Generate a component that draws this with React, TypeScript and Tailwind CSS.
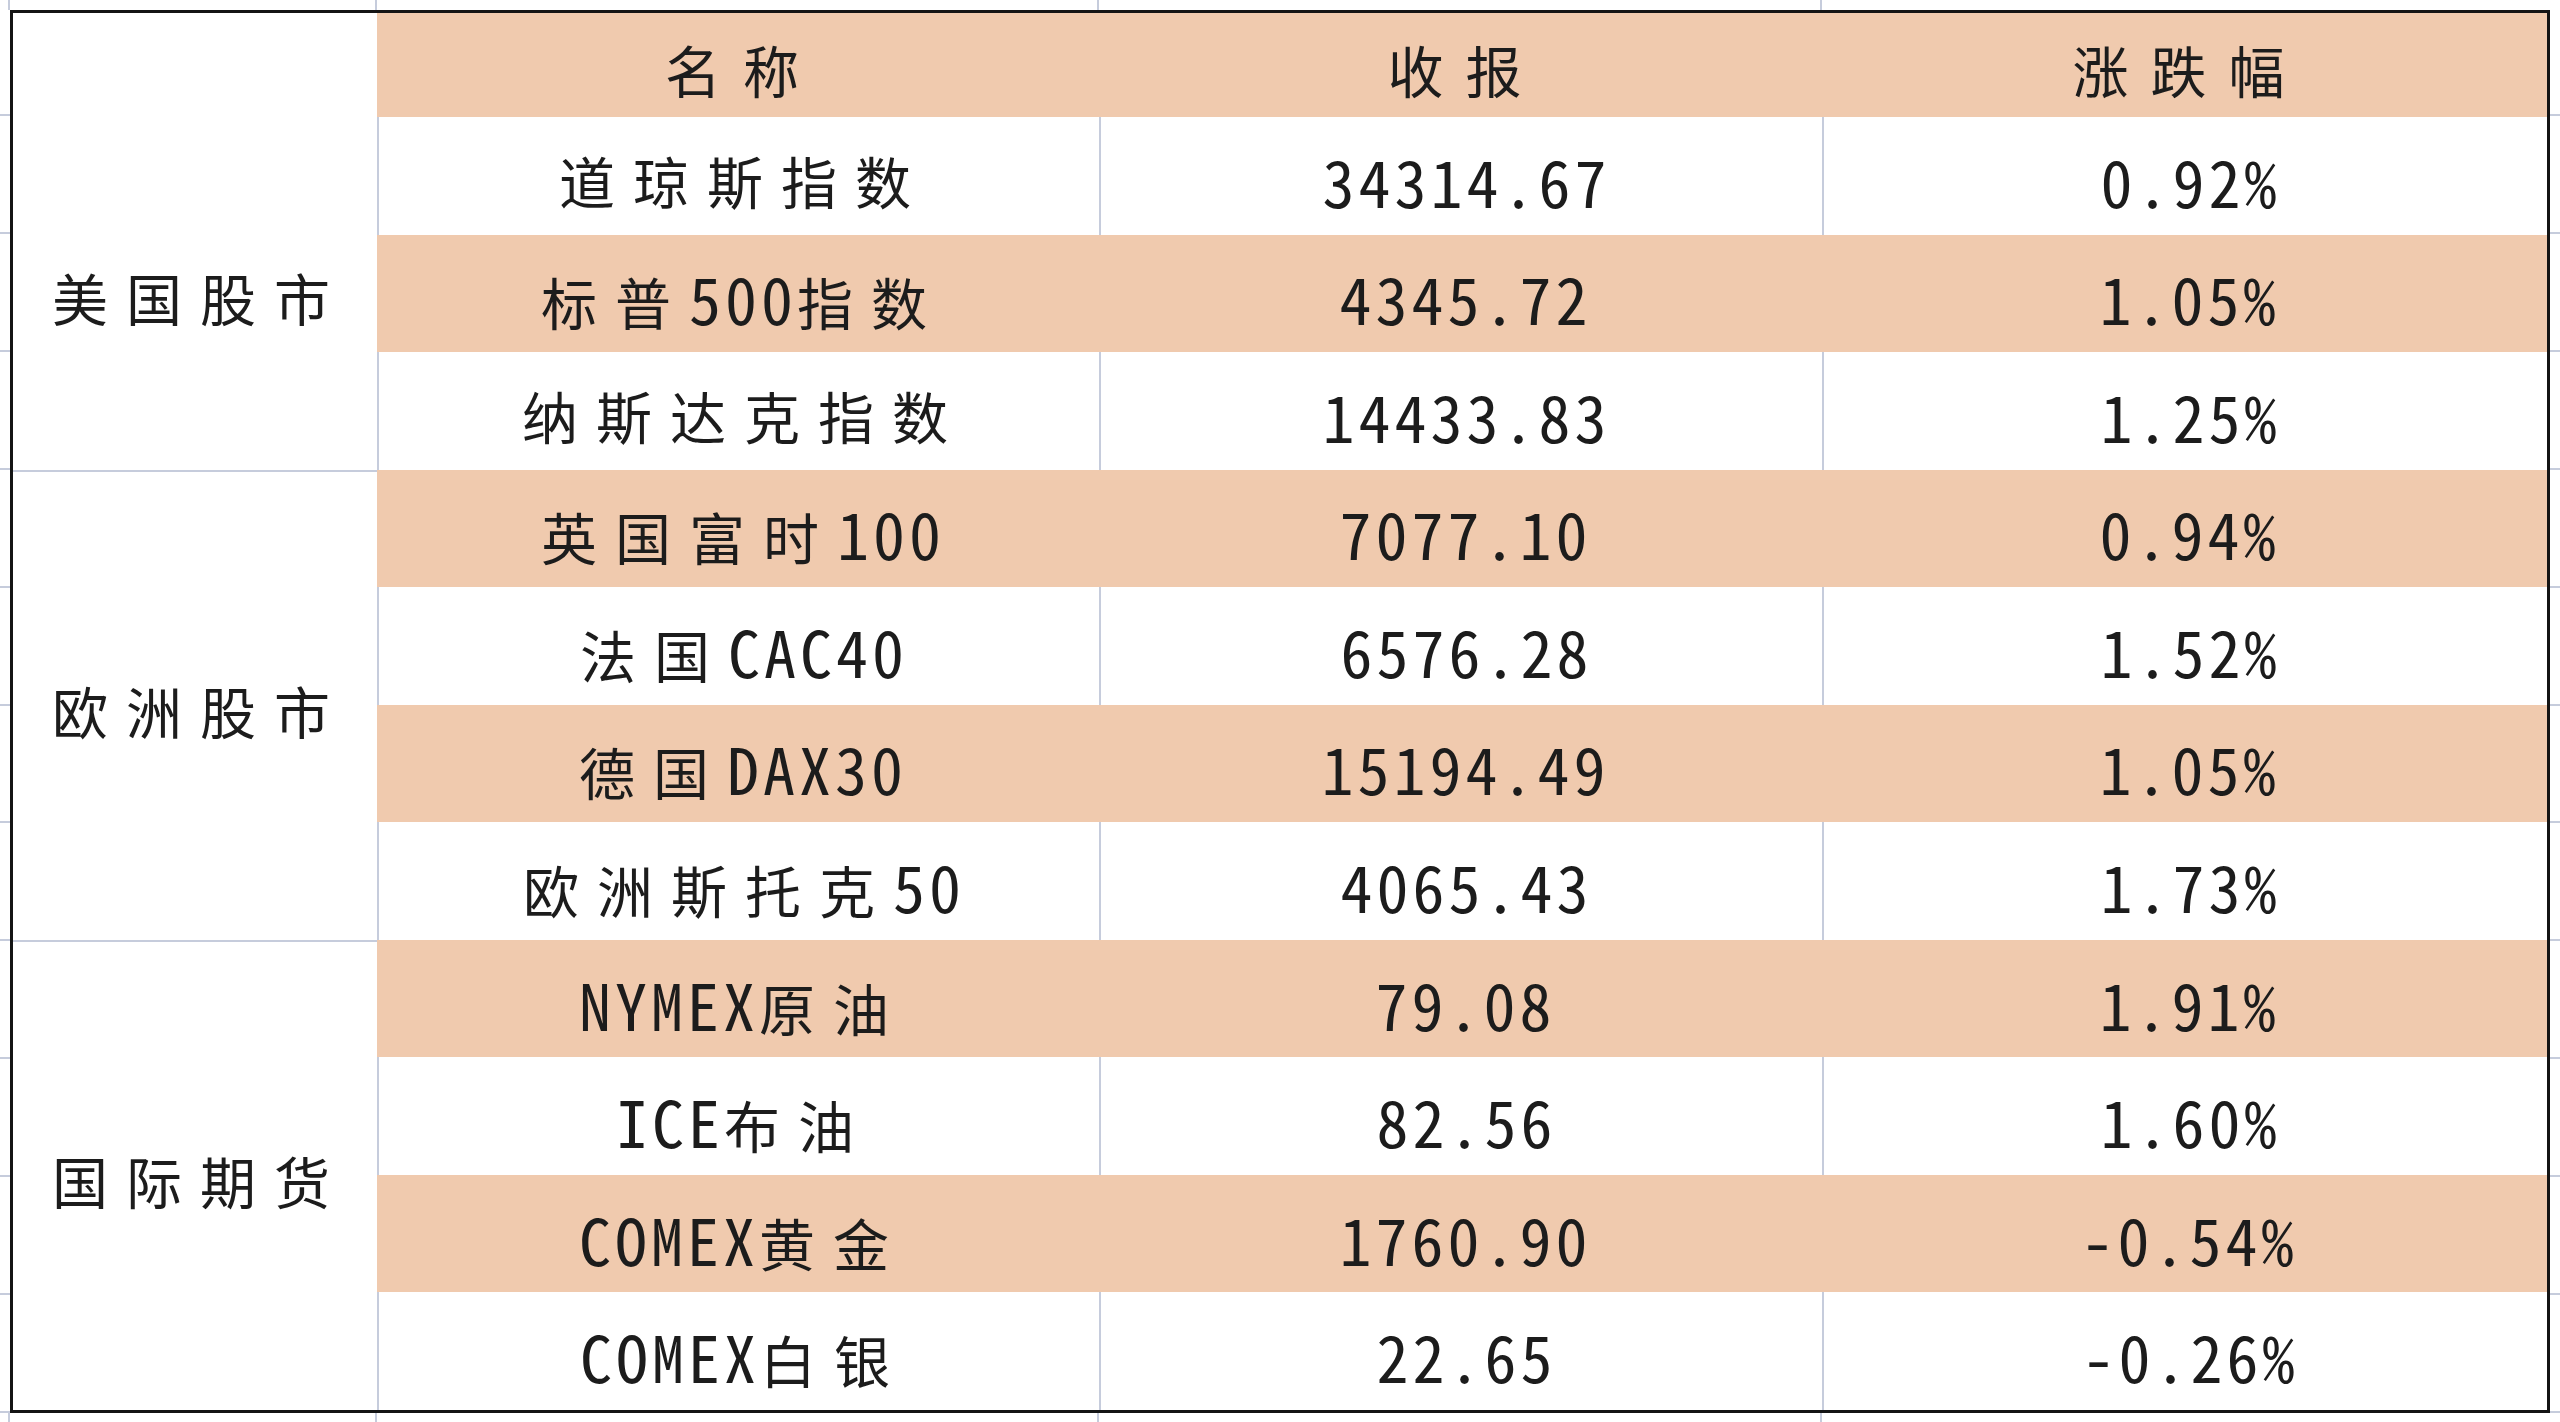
import React from 'react';

interface Row {
    name: string;
    close: string;
    change: string;
}

interface Group {
    label: string;
    rows: Row[];
}

const groups: Group[] = [
    {
        label: '美国股市',
        rows: [
            { name: '道琼斯指数', close: '34314.67', change: '0.92%' },
            { name: '标普500指数', close: '4345.72', change: '1.05%' },
            { name: '纳斯达克指数', close: '14433.83', change: '1.25%' },
        ],
    },
    {
        label: '欧洲股市',
        rows: [
            { name: '英国富时100', close: '7077.10', change: '0.94%' },
            { name: '法国CAC40', close: '6576.28', change: '1.52%' },
            { name: '德国DAX30', close: '15194.49', change: '1.05%' },
            { name: '欧洲斯托克50', close: '4065.43', change: '1.73%' },
        ],
    },
    {
        label: '国际期货',
        rows: [
            { name: 'NYMEX原油', close: '79.08', change: '1.91%' },
            { name: 'ICE布油', close: '82.56', change: '1.60%' },
            { name: 'COMEX黄金', close: '1760.90', change: '-0.54%' },
            { name: 'COMEX白银', close: '22.65', change: '-0.26%' },
        ],
    },
];

// split mixed text so CJK and half-width runs get their own size / spacing
const Txt: React.FC<{ text: string; header?: boolean }> = ({ text, header }) => {
    const runs = text.match(/[\u4e00-\u9fff]+|[^\u4e00-\u9fff]+/g) || [];
    return (
        <span className="whitespace-nowrap leading-none">
            {runs.map((run, i) =>
                /[\u4e00-\u9fff]/.test(run) ? (
                    <span
                        key={i}
                        className={`font-['Noto_Sans_CJK_SC',sans-serif] text-[56px] ${header ? 'tracking-[22px]' : 'tracking-[18px]'}`}
                    >
                        {run}
                    </span>
                ) : (
                    <span key={i} className="font-['Noto_Sans_Mono_CJK_SC','Noto_Sans_CJK_SC',monospace] text-[64px] tracking-[4px]">
                        {run}
                    </span>
                )
            )}
        </span>
    );
};

const cell = 'flex items-center justify-center pt-[8px] pl-[10px] text-[#1c1c1c]';
const peach = 'bg-[#f0caae]';
const grid = 'border-l-2 border-[#c6ccdc]';

const App: React.FC = () => {
    let rowIndex = 0;

    return (
        <div className="w-[2560px] h-[1422px] bg-white flex flex-col overflow-hidden">
            {/* Sheet gridlines above the table */}
            <div className="h-[10px] flex">
                <div className="w-[10px] border-r-2 border-[#c6ccdc]" />
                <div className="w-[367px] border-r-2 border-[#c6ccdc]" />
                <div className="w-[722px] border-r-2 border-[#c6ccdc]" />
                <div className="w-[723px] border-r-2 border-[#c6ccdc]" />
                <div className="flex-1" />
            </div>

            <div className="h-[1403px] flex">
                {/* Sheet gridlines left */}
                <div className="w-[10px] flex flex-col">
                    <div className="h-[106px] border-b-2 border-[#c6ccdc]" />
                    {Array.from({ length: 11 }).map((_, i) => (
                        <div key={i} className="flex-1 border-b-2 border-[#c6ccdc]" />
                    ))}
                </div>

                {/* Table */}
                <div className="flex-1 border-[3px] border-[#141414] grid grid-cols-[364px_722px_723px_1fr] grid-rows-[104px_repeat(11,minmax(0,1fr))]">
                    {/* Header */}
                    <div className="bg-white" />
                    <div className={`${cell} ${peach}`}>
                        <Txt text="名称" header />
                    </div>
                    <div className={`${cell} ${peach}`}>
                        <Txt text="收报" header />
                    </div>
                    <div className={`${cell} ${peach}`}>
                        <Txt text="涨跌幅" header />
                    </div>

                    {groups.map((group, gi) => (
                        <React.Fragment key={group.label}>
                            <div
                                className={`${cell} bg-white ${gi > 0 ? 'border-t-2 border-[#c6ccdc]' : ''} ${
                                    group.rows.length === 3 ? 'row-span-3' : 'row-span-4'
                                }`}
                            >
                                <Txt text={group.label} />
                            </div>
                            {group.rows.map((row) => {
                                rowIndex += 1;
                                const isPeach = rowIndex % 2 === 0;
                                const bg = isPeach ? peach : `bg-white ${grid}`;
                                return (
                                    <React.Fragment key={row.name}>
                                        <div className={`${cell} ${bg}`}>
                                            <Txt text={row.name} />
                                        </div>
                                        <div className={`${cell} ${bg}`}>
                                            <Txt text={row.close} />
                                        </div>
                                        <div className={`${cell} ${bg}`}>
                                            <Txt text={row.change} />
                                        </div>
                                    </React.Fragment>
                                );
                            })}
                        </React.Fragment>
                    ))}
                </div>

                {/* Sheet gridlines right */}
                <div className="w-[10px] flex flex-col">
                    <div className="h-[106px] border-b-2 border-[#c6ccdc]" />
                    {Array.from({ length: 11 }).map((_, i) => (
                        <div key={i} className="flex-1 border-b-2 border-[#c6ccdc]" />
                    ))}
                </div>
            </div>

            {/* Sheet gridlines below the table */}
            <div className="flex-1 flex">
                <div className="w-[10px] border-r-2 border-[#c6ccdc]" />
                <div className="w-[367px] border-r-2 border-[#c6ccdc]" />
                <div className="w-[722px] border-r-2 border-[#c6ccdc]" />
                <div className="w-[723px] border-r-2 border-[#c6ccdc]" />
                <div className="flex-1" />
            </div>
        </div>
    );
};

export default App;
